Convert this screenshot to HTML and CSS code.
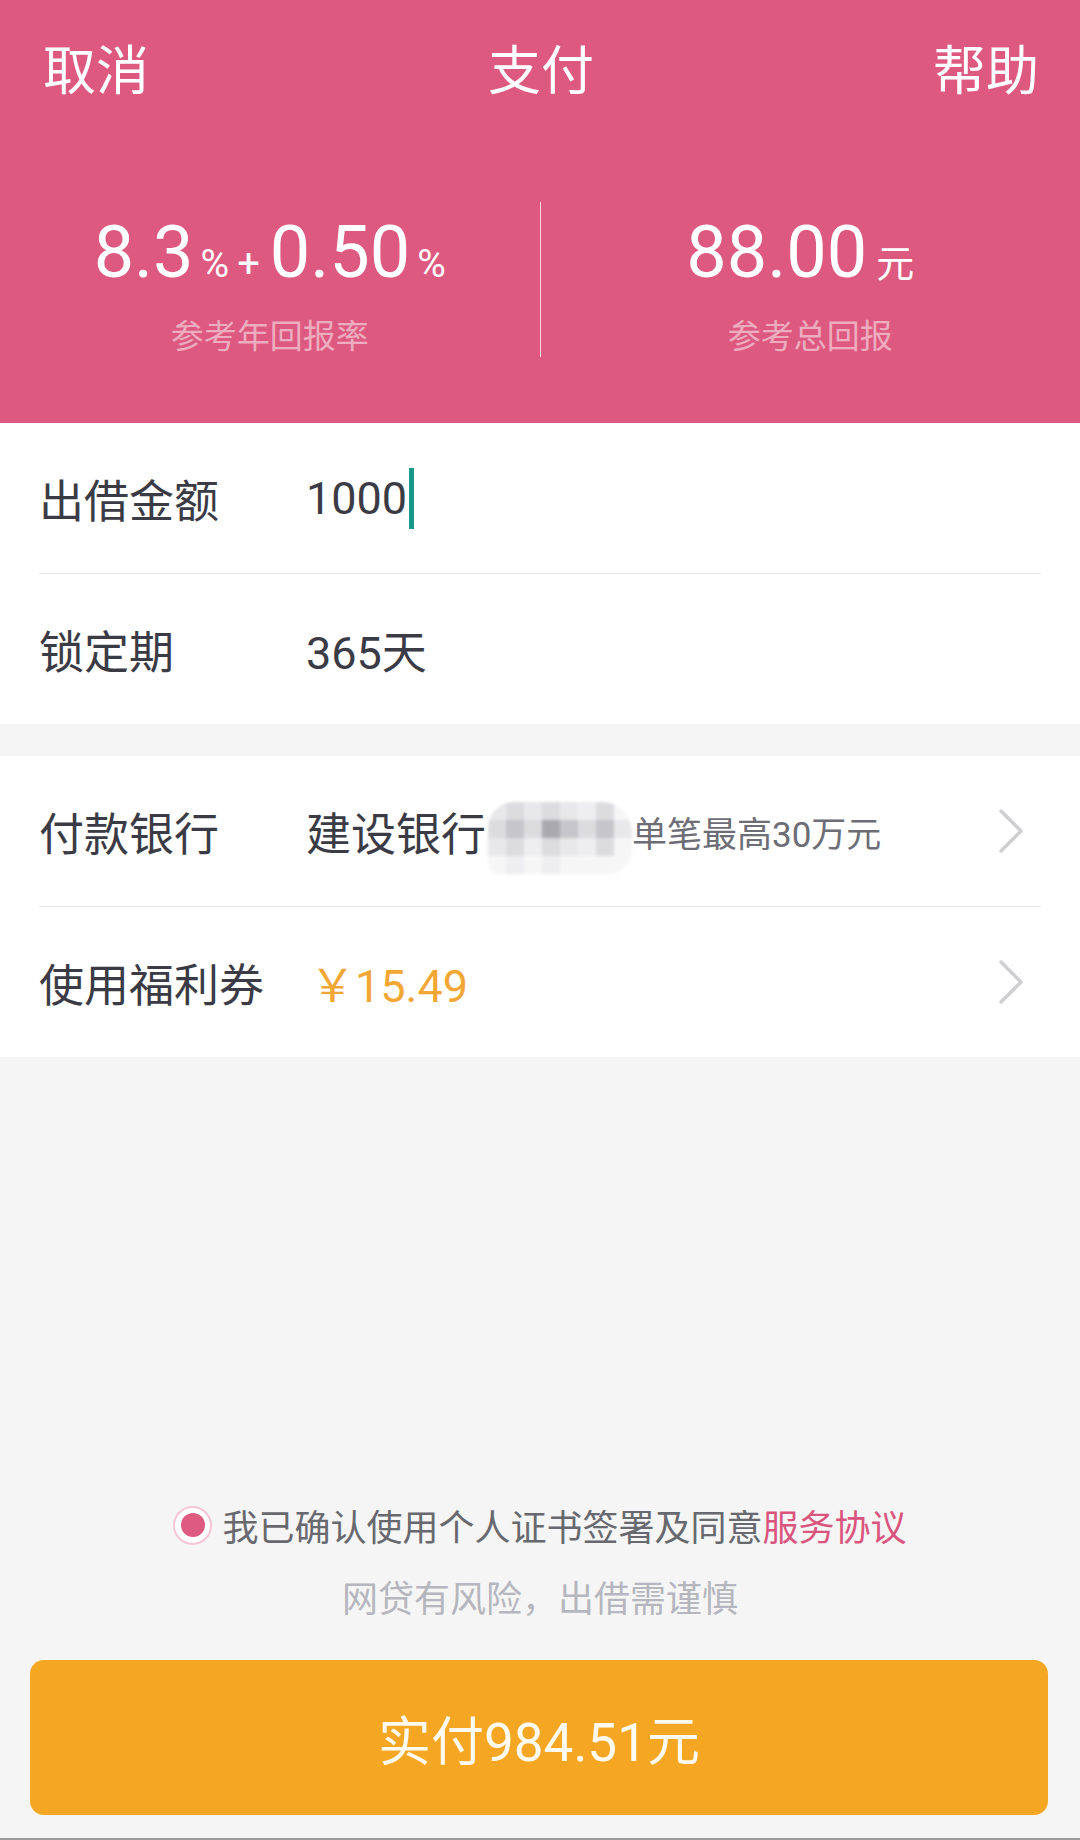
FILE: index.html
```html
<!DOCTYPE html>
<html lang="zh-CN">
<head>
    <meta charset="UTF-8">
    <meta name="viewport" content="width=device-width, initial-scale=1.0">
    <title>支付</title>
    <link rel="stylesheet" href="styles.css">
</head>
<body>
<div class="page">
    <div class="header">
        <div class="nav">
            <span class="nav-btn">取消</span>
            <span class="nav-title">支付</span>
            <span class="nav-btn">帮助</span>
        </div>
        <div class="stats">
            <div class="stat">
                <div class="stat-num">8.3<span class="unit">%</span><span class="plus">+</span>0.50<span class="unit">%</span></div>
                <div class="stat-label">参考年回报率</div>
            </div>
            <div class="stat-divider"></div>
            <div class="stat stat-right">
                <div class="stat-num">88.00<span class="unit yuan">元</span></div>
                <div class="stat-label">参考总回报</div>
            </div>
        </div>
    </div>

    <div class="group">
        <div class="row">
            <div class="row-label">出借金额</div>
            <div class="row-value">1000<span class="cursor"></span></div>
        </div>
        <div class="row">
            <div class="row-label">锁定期</div>
            <div class="row-value">365天</div>
        </div>
    </div>

    <div class="group">
        <div class="row">
            <div class="row-label">付款银行</div>
            <div class="row-value">
                建设银行
                <!-- card number blurred out -->
                <span class="mosaic">
                    <i class="m1"></i><i class="m2"></i><i class="m1"></i><i class="m2"></i><i class="m1"></i><i class="m3"></i><i class="m2"></i><i class="m0"></i>
                    <i class="m2"></i><i class="m4"></i><i class="m2"></i><i class="m5"></i><i class="m4"></i><i class="m2"></i><i class="m4"></i><i class="m1"></i>
                    <i class="m1"></i><i class="m2"></i><i class="m3"></i><i class="m2"></i><i class="m1"></i><i class="m3"></i><i class="m2"></i><i class="m0"></i>
                    <i class="m0"></i><i class="m3"></i><i class="m0"></i><i class="m3"></i><i class="m0"></i><i class="m0"></i><i class="m0"></i><i class="m0"></i>
                </span>
                <span class="row-hint">单笔最高30万元</span>
            </div>
            <svg class="chevron" viewBox="0 0 26 46" width="26" height="46">
                <polyline points="3,3 23,23 3,43" fill="none" stroke="#cfcfd2" stroke-width="3.5" stroke-linecap="round" stroke-linejoin="round"/>
            </svg>
        </div>
        <div class="row">
            <div class="row-label">使用福利券</div>
            <div class="row-value coupon">￥15.49</div>
            <svg class="chevron" viewBox="0 0 26 46" width="26" height="46">
                <polyline points="3,3 23,23 3,43" fill="none" stroke="#cfcfd2" stroke-width="3.5" stroke-linecap="round" stroke-linejoin="round"/>
            </svg>
        </div>
    </div>

    <div class="footer">
        <div class="agree">
            <span class="radio"><span class="radio-dot"></span></span>
            <span>我已确认使用个人证书签署及同意<a class="agree-link">服务协议</a></span>
        </div>
        <div class="tip">网贷有风险，出借需谨慎</div>
        <button class="pay-btn">实付984.51元</button>
    </div>
</div>
</body>
</html>
```

FILE: styles.css
```css
* {
    box-sizing: border-box;
}
body {
    margin: 0;
    font-family: Roboto, "Noto Sans CJK SC", sans-serif;
    background-color: #f5f5f5;
    color: #3b3b45;
}
.page {
    height: 1840px;
    display: flex;
    flex-direction: column;
    border-bottom: 2px solid #9a9a9c;
}
.header {
    background-color: #dd5980;
    height: 423px;
    color: #fff;
}
.nav {
    height: 134px;
    padding: 0 41px 0 43px;
    display: flex;
    align-items: center;
    justify-content: space-between;
    font-size: 53px;
}
.stats {
    display: flex;
    margin-top: 68px;
    height: 155px;
}
.stat {
    flex: 1;
    text-align: center;
    padding-top: 6px;
}
.stat-right .stat-num {
    padding-right: 20px;
}
.stat-divider {
    width: 1px;
    background-color: rgba(255, 255, 255, 0.75);
}
.stat-num {
    font-size: 72px;
    line-height: 90px;
}
.unit {
    font-size: 39px;
    line-height: 1;
    margin-left: 7px;
}
.unit.yuan {
    font-size: 38px;
    margin-left: 9px;
}
.plus {
    font-size: 40px;
    line-height: 1;
    margin: 0 10px 0 8px;
}
.stat-label {
    margin-top: 19px;
    font-size: 33px;
    line-height: 40px;
    color: rgba(255, 255, 255, 0.5);
}
.group {
    background-color: #fff;
}
.group + .group {
    margin-top: 32px;
}
.row {
    height: 151px;
    margin: 0 39px;
    display: flex;
    align-items: center;
    border-bottom: 1px solid #e8e8ea;
    font-size: 45px;
}
.row:last-child {
    border-bottom: none;
    height: 150px;
}
.row-label {
    width: 267px;
    flex-shrink: 0;
}
.row-value {
    flex: 1;
    display: flex;
    align-items: center;
    white-space: nowrap;
}
.cursor {
    display: inline-block;
    width: 5px;
    height: 61px;
    background-color: #17998a;
    margin-left: 2px;
}
.mosaic {
    display: inline-grid;
    grid-template-columns: repeat(8, 18px);
    grid-auto-rows: 18px;
    margin: 14px 0 0 2px;
    border-radius: 26px 30px 24px 10px;
    overflow: hidden;
    filter: blur(1.5px);
}
.mosaic i { display: block; }
.m0 { background-color: #f6f6f7; }
.m1 { background-color: #e8e8ea; }
.m2 { background-color: #dcdcdf; }
.m3 { background-color: #eeeef0; }
.m4 { background-color: #c6c6ca; }
.m5 { background-color: #a9a9ae; }
.row-hint {
    font-size: 35px;
    color: #6d6d76;
}
.coupon {
    color: #f2a633;
    padding-left: 4px;
}
.chevron {
    flex-shrink: 0;
    margin-right: 17px;
}
.footer {
    margin-top: auto;
    padding-bottom: 23px;
}
.agree {
    display: flex;
    align-items: center;
    justify-content: center;
    height: 50px;
    font-size: 36px;
    color: #68686f;
}
.radio {
    width: 39px;
    height: 39px;
    border-radius: 50%;
    border: 2px solid #f7c6d5;
    background-color: #fff;
    display: flex;
    align-items: center;
    justify-content: center;
    margin-right: 10px;
}
.radio-dot {
    width: 24px;
    height: 24px;
    border-radius: 50%;
    background-color: #de5a80;
}
.agree-link {
    color: #d9557e;
}
.tip {
    margin-top: 25px;
    height: 50px;
    line-height: 50px;
    text-align: center;
    font-size: 36px;
    color: #b6b6be;
}
.pay-btn {
    display: block;
    width: 1018px;
    height: 155px;
    margin: 35px 0 0 30px;
    border: none;
    border-radius: 14px;
    background-color: #f5a724;
    color: #fffaf0;
    font-family: Roboto, "Noto Sans CJK SC", sans-serif;
    font-size: 53px;
}
```
